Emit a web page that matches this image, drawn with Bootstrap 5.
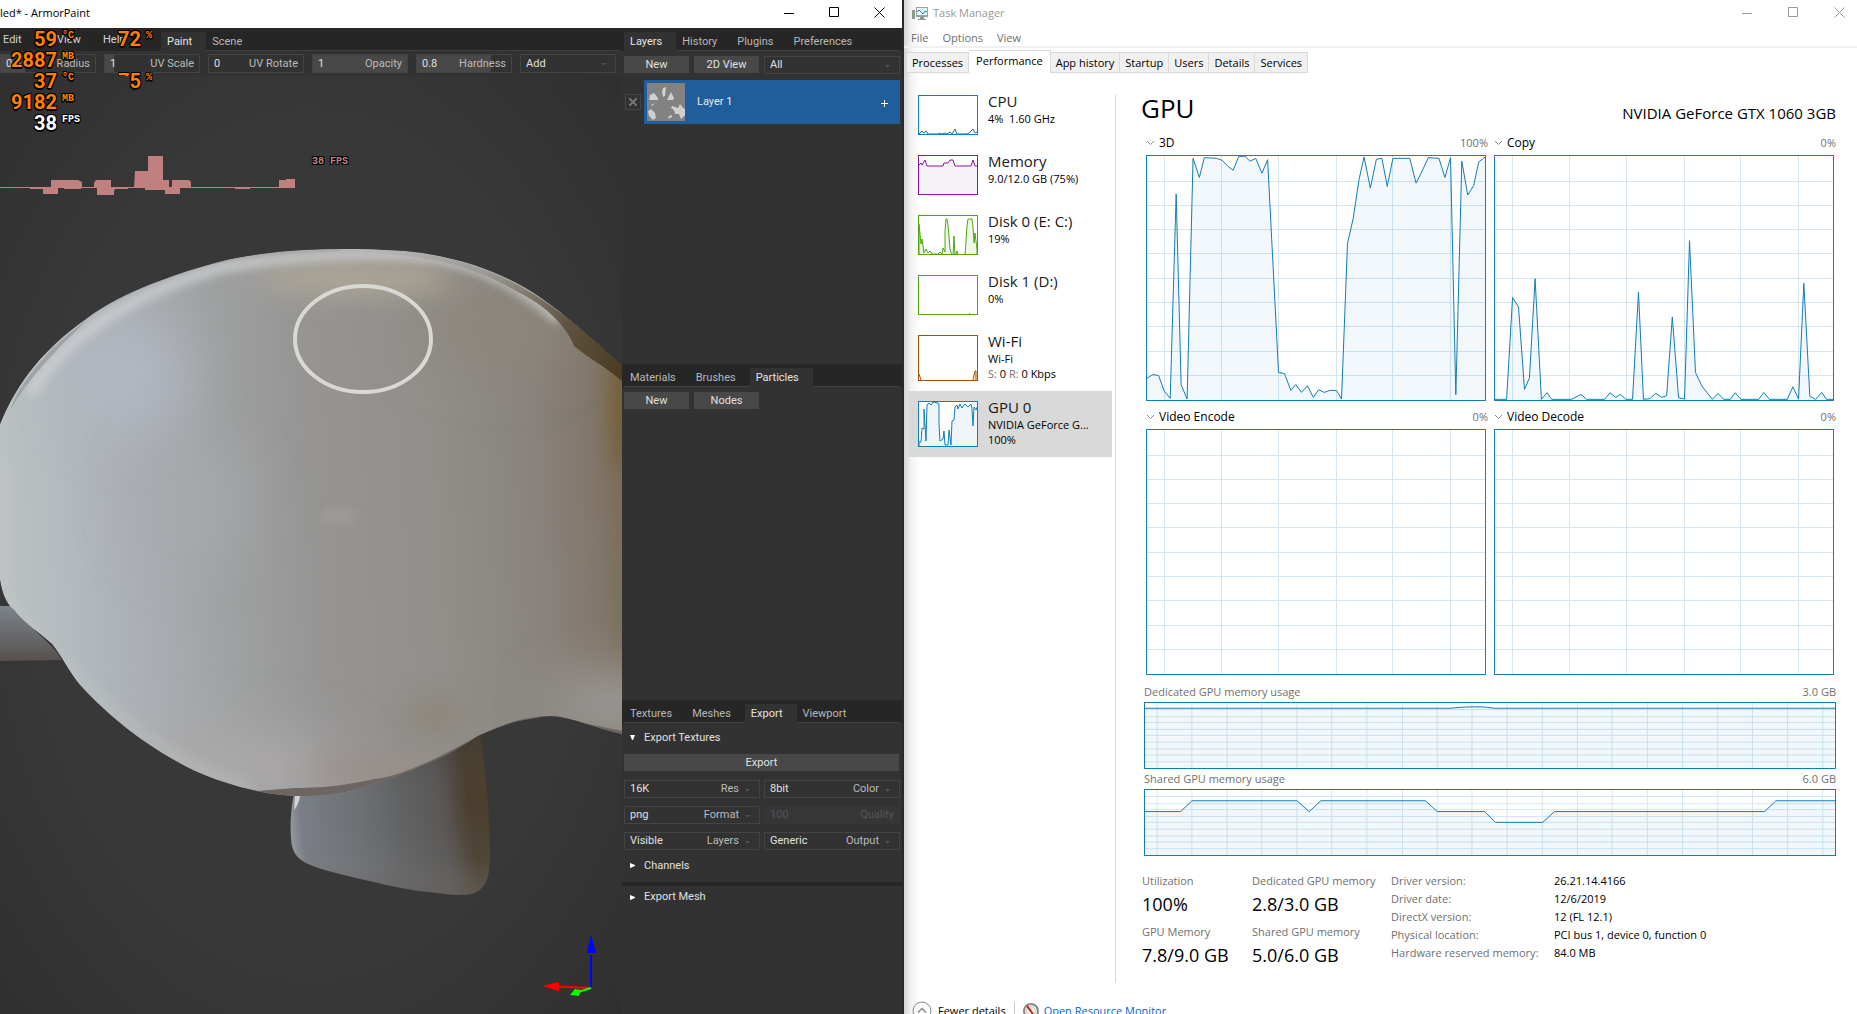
<!DOCTYPE html>
<html lang="en">
<head>
<meta charset="utf-8">
<meta name="viewport" content="width=device-width, initial-scale=1">
<title>ArmorPaint and Task Manager</title>
<link href="https://cdn.jsdelivr.net/npm/bootstrap@5.3.0/dist/css/bootstrap.min.css" rel="stylesheet">
<style>
  body { font-family: "Open Sans", "Noto Sans", sans-serif; font-size: 11px; line-height: 16px; color: #000; background: #fff; }
  button, input, select { font: inherit; color: inherit; border: 0; background: none; padding: 0; margin: 0; border-radius: 0; min-width: 0; }
  svg { display: block; }
  .desk { display: grid; grid-template-columns: 904fr 953fr; grid-template-rows: 100%; height: 100vh; overflow: hidden; background: #262a34; }
  .win-btn { width: 46px; height: 100%; display: flex; align-items: center; justify-content: center; }
  .win-btn svg { width: 11px; height: 11px; fill: none; stroke: currentColor; }

  /* ArmorPaint */
  .ap { display: flex; flex-direction: column; margin-right: 2px; min-width: 0; min-height: 0; background: #323232; }
  .ap-title { height: 28px; flex: none; background: #fff; line-height: 25px; }
  .ap-title .win-btn { width: 45px; height: 24px; }
  .ap-body { display: grid; grid-template-columns: 622fr 280fr; grid-template-rows: 100%; flex: 1; min-height: 0; font-family: Roboto, sans-serif; color: #ddd; }
  .ap-tabs { display: flex; height: 23px; padding-top: 4px; background: linear-gradient(#404040, #404040) 2px 22px / calc(100% - 4px) 1px no-repeat #262626; color: #b8b8b8; }
  .ap-tabs button { padding: 0 14px 0 6px; line-height: 18px; }
  .ap-side .ap-tabs { padding-left: 2px; }
  .ap-tabs .on { background: #323232; color: #e4e4e4; }
  .ap-menu { display: grid; grid-template-columns: 54px 46px 60px; flex: none; background: #262626; line-height: 15px; color: #d4d4d4; margin-right: 1px; }
  .ap-tabs .ap-menu button { text-align: left; padding: 0 0 0 3px; height: 15px; line-height: 15px; }
  .ap-tools { display: grid; grid-template-columns: repeat(6, 1fr); gap: 8px; padding: 3px 6px 3px 0; height: 25px; background: #323232; }
  .slot { display: flex; align-items: center; gap: 4px; height: 19px; padding: 0 5px; border: 1px solid #434343; line-height: 16px; color: #bbb;
          background: linear-gradient(90deg, #484848 var(--fill, 0%), transparent var(--fill, 0%)); }
  .slot input, .slot select { flex: 1; width: 0; color: #e0e0e0; appearance: none; outline: 0; }
  .slot .tri { width: 5px; height: 3px; margin: 2px 4px 0 2px; fill: #505050; }
  .slot.off, .slot.off input { color: #555; border-color: #363636; background-color: #363636; }
  .ap-view { position: relative; min-height: 0; flex: 1; background: #373737; }
  .ap-left { position: relative; display: flex; flex-direction: column; min-height: 0; min-width: 0; }
  .ap-side { display: flex; flex-direction: column; min-height: 0; min-width: 0; }
  .ap-sec { flex: 336 1 0; min-height: 0; }
  .ap-sec.last { flex-grow: 314; }
  .ap-btn { height: 17px; line-height: 17px; background: #484848; color: #e0e0e0; text-align: center; }
  .ap-row { display: grid; grid-template-columns: 65px 65px 1fr; gap: 5px; padding: 5px 2px 0; }
  .ap-row .slot { height: 18px; }
  .layer-row { display: flex; align-items: center; gap: 3px; padding: 6px 2px 0 3px; }
  .eye { width: 16px; height: 16px; border: 1px solid #454545; appearance: none; margin: 0;
         background: linear-gradient(45deg, transparent 42%, #707070 42% 58%, transparent 58%) 3px 3px / 8px 8px no-repeat, linear-gradient(-45deg, transparent 42%, #707070 42% 58%, transparent 58%) 3px 3px / 8px 8px no-repeat; }
  .layer { display: flex; align-items: center; flex: 1; height: 44px; padding: 0 10px 0 3px; background: #205d9c; color: #e8e8e8; text-align: left; }
  .layer .plus { width: 11px; height: 11px; stroke: #fff; margin-top: 3px; }
  .fold { display: flex; align-items: center; gap: 9px; padding-left: 8px; height: 31px; color: #e0e0e0; }
  .fold svg { width: 5px; height: 5px; fill: #fff; }
  .fold.low { height: 22px; }
  .fold.high { padding-bottom: 2px; }
  .export { display: grid; padding: 0 3px 0 2px; }
  .pairs { display: grid; grid-template-columns: 1fr 1fr; gap: 8px 4px; padding: 9px 2px 0; }
  .pairs .slot { height: 18px; }
  .mesh-rule { height: 4px; margin-top: 1px; background: #262626; }

  /* frame-rate overlay */
  .osd { position: absolute; left: 0; top: 0; display: grid; grid-template-columns: 57px 26px 58px 20px; grid-auto-rows: 21px; color: #ff8000; text-align: right; font: bold 20px/22px Roboto, sans-serif;
         text-shadow: 1px 1px #000, -1px 1px #000, 1px -1px #000, -1px -1px #000, 0 2px #000; }
  .osd small { font: bold 10px/16px "Liberation Mono", monospace; text-align: left; padding-left: 5px; }
  .osd .fps { color: #fff; }
  .osd .cut { display: inline-block; clip-path: inset(0 0 16px 0); }
  .osd-plot { position: absolute; left: 0; top: 80px; width: 296px; height: 42px; fill: #c08080; }
  .osd-now { position: absolute; left: 312px; top: 80px; font: bold 10px/12px "Liberation Mono", monospace; color: #c08080; text-shadow: 1px 1px #000, -1px 1px #000, 1px -1px #000, -1px -1px #000; }

  /* Task Manager */
  .tm { display: flex; flex-direction: column; min-width: 0; min-height: 0; overflow: hidden; background: linear-gradient(90deg, #d4d4d4, #f2f2f2 7px, #fff 16px) #fff; }
  .tm-title { display: flex; align-items: center; height: 27px; flex: none; padding: 0 0 2px 8px; margin-right: -5px; color: #999; }
  .tm-title svg.logo { width: 16px; height: 15px; margin: 2px 5px 0 0; }
  .tm-menu { display: flex; gap: 14px; padding-left: 7px; height: 21px; flex: none; color: #6d6d6d; border-bottom: 2px solid #f0f0f0; }
  .tm-menu button { line-height: 22px; height: 20px; }
  .tm-tabs { display: flex; align-items: flex-end; height: 25px; flex: none; padding-left: 2px; }
  .tm-tabs button { height: 21px; padding: 0 5px; background: #f0f0f0; border: 1px solid #d9d9d9; border-left: 0; line-height: 19px; }
  .tm-tabs button:first-child { border-left: 1px solid #d9d9d9; }
  .tm-tabs .on { height: 23px; background: #fff; border-bottom: 0; padding: 0 7px 3px; }
  .tm-body { display: flex; flex: none; min-height: 910px; }
  .tm-list { width: 211px; flex: none; padding: 12px 3px 0 4px; }
  .res { display: flex; gap: 10px; width: 100%; min-height: 60px; padding: 6px 8px 5px 10px; text-align: left; align-items: flex-start; }
  .res.tall { min-height: 66px; }
  .res.on { background: #d9d9d9; }
  .res > svg { flex: none; width: 60px; height: 40px; margin-top: 4px; border: 1px solid var(--c); background: #fff; stroke: var(--c); fill: var(--f); }
  .res.tall > svg { height: 46px; }
  .res b { display: block; font-weight: 400; font-size: 15px; line-height: 20px; color: #1a1a1a; }
  .res span span { display: block; white-space: nowrap; line-height: 15px; }
  .muted { color: #707070; }
  .tm-main { flex: 1; min-width: 0; margin-top: 22px; padding: 0 21px 0 26px; border-left: 1px solid #d9d9d9; }
  .gpu-head { display: flex; justify-content: space-between; align-items: center; height: 44px; margin: -8px 0 0 -1px; }
  .gpu-head h1 { font-size: 26px; line-height: 36px; margin: 0; padding-bottom: 2px; font-weight: 400; }
  .gpu-head h2 { font-size: 15px; line-height: 20px; margin: 8px 0 0; font-weight: 400; }
  .engines { display: grid; grid-template-columns: 1fr 1fr; gap: 4px 8px; padding: 0 2px 0 4px; }
  .cap { display: flex; align-items: center; height: 24px; padding-bottom: 1px; font-size: 12px; margin-right: -2px; }
  .cap svg { width: 9px; height: 6px; margin-right: 4px; fill: none; stroke: #888; }
  .cap span { font-size: 11px; margin-left: auto; color: #707070; }
  .plot { border: 1px solid #117dbb; height: 246px; }
  .plot svg { width: 100%; height: 100%; }
  .plot .grid { stroke: #d5e6f1; shape-rendering: crispEdges; fill: none; }
  .plot .area { fill: #117dbb; fill-opacity: .06; stroke: #117dbb; vector-effect: non-scaling-stroke; }
  .mem { padding-left: 2px; }
  .mem .plot { height: 67px; }
  .mem-cap { display: flex; justify-content: space-between; line-height: 20px; color: #707070; }
  .mem-cap.first { margin-top: 7px; }
  .stats { display: flex; margin-top: 16px; line-height: 18px; white-space: nowrap; }
  .stats dl, .stats dd, .stats dt { margin: 0; font-weight: 400; }
  .stats dt { color: #707070; }
  .big { display: grid; grid-template-columns: 110px 139px; row-gap: 5px; }
  .big dd { font-size: 18px; line-height: 28px; }
  .drv { display: grid; grid-template-columns: 163px auto; align-content: start; }
  .tm-foot { display: flex; align-items: center; flex: none; height: 24px; margin-top: 16px; padding-left: 8px; }
  .tm-foot svg { width: 20px; height: 20px; fill: none; }
  .tm-foot button { display: flex; align-items: center; gap: 6px; padding-right: 8px; border-right: 1px solid #c8c8c8; height: 18px; }
  .tm-foot a { display: flex; align-items: center; gap: 5px; margin-left: 8px; color: #0066cc; text-decoration: none; }
  .tm-foot a svg { width: 16px; height: 16px; }
</style>
<script src="https://cdn.jsdelivr.net/npm/bootstrap@5.3.0/dist/js/bootstrap.bundle.min.js"></script>
</head>
<body>
<svg width="0" height="0" class="position-absolute" aria-hidden="true">
  <defs>
    <path id="g-big" vector-effect="non-scaling-stroke" d="M52 0V738M226 0V738M397 0V738M571 0V738M742 0V738M916 0V738M0 76H1020M0 149H1020M0 223H1020M0 296H1020M0 370H1020M0 443H1020M0 517H1020M0 590H1020M0 664H1020"/>
    <path id="g-mem" vector-effect="non-scaling-stroke" d="M26 0V199M100 0V199M175 0V199M249 0V199M324 0V199M398 0V199M473 0V199M549 0V199M623 0V199M697 0V199M772 0V199M847 0V199M922 0V199M996 0V199M1071 0V199M1146 0V199M1221 0V199M1295 0V199M1370 0V199M1445 0V199M0 20H1471M0 42H1471M0 60H1471M0 81H1471M0 99H1471M0 120H1471M0 141H1471M0 159H1471M0 180H1471"/>
  </defs>
</svg>
<main class="desk">
  <section class="ap" aria-label="ArmorPaint">
    <header class="ap-title d-flex justify-content-between">
      <span class="text-nowrap">led* - ArmorPaint</span>
      <div class="d-flex">
        <button class="win-btn" aria-label="Minimize"><svg viewBox="0 0 11 11"><path d="M0 6.500H10"/></svg></button>
        <button class="win-btn" aria-label="Maximize"><svg viewBox="0 0 11 11"><path d="M.5.5h9v9h-9z"/></svg></button>
        <button class="win-btn" aria-label="Close"><svg viewBox="0 0 11 11"><path d="M.5.5l10 10M10.500.5l-10 10"/></svg></button>
      </div>
    </header>
    <div class="ap-body">
      <div class="ap-left">
        <nav class="ap-tabs">
          <div class="ap-menu"><button>Edit</button><button>View</button><button>Help</button></div>
          <button class="on">Paint</button><button>Scene</button>
        </nav>
        <div class="ap-tools">
          <label class="slot" style="--fill:25%"><input value="0.5"><span>Radius</span></label>
          <label class="slot" style="--fill:10%"><input value="1"><span>UV Scale</span></label>
          <label class="slot"><input value="0"><span>UV Rotate</span></label>
          <label class="slot" style="--fill:100%"><input value="1"><span>Opacity</span></label>
          <label class="slot" style="--fill:79%"><input value="0.8"><span>Hardness</span></label>
          <label class="slot"><select aria-label="Blending"><option>Add</option></select><svg class="tri" viewBox="0 0 5 3"><path d="M0 0h5L2.500 3z"/></svg></label>
        </div>
        <div class="ap-view">
          <svg class="position-absolute w-100 h-100" viewBox="0 76 622 938" preserveAspectRatio="xMidYMid slice" role="img" aria-label="3D viewport">
            <defs>
              <radialGradient id="bg" cx=".5" cy=".5" r=".75"><stop offset=".6" stop-color="#383838"/><stop offset="1" stop-color="#2e2e2e"/></radialGradient>
              <linearGradient id="skin" gradientUnits="userSpaceOnUse" x1="0" y1="520" x2="622" y2="480">
                <stop offset="0" stop-color="#bcc1c2"/><stop offset=".1" stop-color="#b4babe"/><stop offset=".24" stop-color="#a9adb2"/><stop offset=".36" stop-color="#9fa1a2"/><stop offset=".5" stop-color="#969594"/><stop offset=".7" stop-color="#918f8a"/><stop offset=".87" stop-color="#88827c"/><stop offset=".95" stop-color="#81776c"/><stop offset="1" stop-color="#7b6d58"/>
              </linearGradient>
              <linearGradient id="ear" gradientUnits="userSpaceOnUse" x1="291" y1="835" x2="490" y2="810">
                <stop offset="0" stop-color="#979ca3"/><stop offset=".06" stop-color="#7b8087"/><stop offset=".35" stop-color="#6e7175"/><stop offset=".55" stop-color="#626364"/><stop offset=".76" stop-color="#5a5856"/><stop offset=".9" stop-color="#4a3e2e"/><stop offset="1" stop-color="#4d3f2c"/>
              </linearGradient>
              <linearGradient id="earlow" x1="0" y1="0" x2="0" y2="1"><stop offset="0" stop-color="#333" stop-opacity=".4"/><stop offset=".4" stop-color="#555" stop-opacity="0"/><stop offset=".8" stop-color="#777" stop-opacity=".15"/><stop offset="1" stop-color="#6b6461" stop-opacity=".6"/></linearGradient>
              <linearGradient id="jaw" x1="0" y1="0" x2="0" y2="1"><stop offset="0" stop-color="#7c848b"/><stop offset="1" stop-color="#57514f"/></linearGradient>
              <linearGradient id="rim" gradientUnits="userSpaceOnUse" x1="380" y1="250" x2="622" y2="370"><stop offset="0" stop-color="#b5b5b4"/><stop offset=".4" stop-color="#9b9995"/><stop offset=".75" stop-color="#5f533f"/><stop offset="1" stop-color="#4a3b22"/></linearGradient>
              <filter id="b30" x="-100%" y="-150%" width="300%" height="400%"><feGaussianBlur stdDeviation="28"/></filter>
              <filter id="b14" x="-100%" y="-200%" width="300%" height="500%"><feGaussianBlur stdDeviation="14"/></filter>
              <filter id="b8" x="-150%" y="-50%" width="400%" height="200%"><feGaussianBlur stdDeviation="8"/></filter>
              <filter id="b4" x="-50%" y="-50%" width="200%" height="200%"><feGaussianBlur stdDeviation="5"/></filter>
              <path id="head" d="M0 424C18 380 46 347 86 319C106 304 127 294 149 285C184 271 222 259 261 254C289 250 317 249 345 249C372 249 400 250 422 253C441 256 458 260 474 265C492 271 507 278 522 286C540 296 554 307 570 320C588 335 604 349 622 366V734C598 729 572 717 550 716C537 717 525 720 514 722C502 726 490 731 478 736C462 746 447 756 430 762C413 770 396 777 378 782C363 788 348 792 333 794C320 796 308 796 295 796C282 795 270 794 257 791C234 786 213 779 193 770C175 761 158 751 141 739C120 724 99 706 80 685C69 672 62 656 52 644C40 633 25 624 14 610C6 604 2 592 0 580Z"/>
              <clipPath id="hc"><use href="#head"/></clipPath>
              <path id="earp" d="M297 780C289 810 290 835 292 846C295 858 303 862 313 866C332 873 353 877 374 882C402 889 430 893 458 895C466 895 473 895 478 891C486 886 488 878 489 870C491 850 489 820 487 790L480 728Z"/>
            </defs>
            <rect y="76" width="622" height="938" fill="url(#bg)"/>
            <path d="M0 606H14C30 630 50 640 62 660L0 661Z" fill="url(#jaw)"/>
            <use href="#earp" fill="url(#ear)"/><use href="#earp" fill="url(#earlow)"/>
            <path d="M295 796h5q-1 8-6 14z" fill="#d0d4d8"/>
            <g clip-path="url(#hc)">
              <use href="#head" fill="url(#skin)"/>
              <ellipse cx="130" cy="380" rx="60" ry="60" fill="#b4b9c4" filter="url(#b30)" opacity=".8"/>
              <ellipse cx="190" cy="500" rx="60" ry="70" fill="#a7abaf" filter="url(#b30)" opacity=".6"/>
              <ellipse cx="500" cy="330" rx="80" ry="35" fill="#8d867d" filter="url(#b30)"/>
              <ellipse cx="355" cy="278" rx="100" ry="14" fill="#b2aa99" filter="url(#b14)"/>
              <ellipse cx="230" cy="770" rx="120" ry="35" fill="#aca9a8" filter="url(#b30)"/>
              <ellipse cx="380" cy="770" rx="70" ry="18" fill="#9a8e8a" filter="url(#b14)" opacity=".8"/>
              <ellipse cx="435" cy="715" rx="26" ry="16" fill="#8b8071" filter="url(#b14)" opacity=".7"/>
              <ellipse cx="622" cy="705" rx="70" ry="28" fill="#a3a2a3" filter="url(#b30)"/>
              <ellipse cx="622" cy="410" rx="10" ry="60" fill="#745c30" filter="url(#b8)" opacity=".8"/>
              <path d="M30 395C65 330 150 288 220 268C290 254 380 251 440 258C490 268 525 290 560 320" fill="none" stroke="#d2d4d6" stroke-width="11" filter="url(#b4)" opacity=".75"/>
              <path d="M0 450V590Q20 625 60 660L110 712Q190 775 250 790" fill="none" stroke="#c3c8c8" stroke-width="8" filter="url(#b8)" opacity=".7"/>
              <ellipse cx="338" cy="516" rx="18" ry="9" fill="#a39e99" filter="url(#b4)" opacity=".7"/>
              <path d="M340 248C400 250 440 254 474 266C530 284 580 325 622 366V381C605 366 588 358 574 346C566 325 545 305 516 291C480 270 430 252 340 252Z" fill="url(#rim)"/>
              <path d="M10 411C18 385 50 345 87 320C60 347 30 375 10 411Z" fill="#9fa4a9"/>
              <path d="M86 318Q130 288 200 266Q260 252 340 250" fill="none" stroke="#a9abac" stroke-width="2"/>
              <path d="M257 791L295 788C330 788 350 784 375 779C405 775 440 757 478 736C500 725 525 716 550 716L622 731V740H550L478 745L380 800H257Z" fill="#6c6562"/>
            </g>
            <ellipse cx="363" cy="339" rx="68" ry="53" fill="none" stroke="#d9d8d5" stroke-width="4"/>
            <path d="M591 988V955" stroke="#00f" stroke-width="2"/><path d="M591 935l5 18h-9z" fill="#00f"/>
            <path d="M591 988L555 986.500" stroke="#f00" stroke-width="2"/><path d="M542 986l17-4v9z" fill="#f00"/>
            <path d="M591 988L575 993" stroke="#0f0" stroke-width="2"/><path d="M570 995l5-6 6 1-2 6z" fill="#0f0"/>
          </svg>
          <svg class="osd-plot" viewBox="0 156 296 42" preserveAspectRatio="none" aria-hidden="true"><path d="M0 187h295v1H0zM51 180h27l4 2v6H51zM43 187h15v7H43zM64 188h17v1H64zM30 188h13v1H30zM96 180h15v8H94v-5zM97 187h19l-2 4v4H97zM114 188h14v1h-14zM135 171h13v17h-14zM148 156h15v34h-15zM163 180h6v10h-24v-3h18zM165 187h15v7h-15zM172 180h17l2 2v6h-19zM235 188h15v1h-15zM279 180h7v-1h9v9h-16z"/></svg>
          <span class="osd-now">38 FPS</span>
        </div>
        <div class="osd" aria-label="Hardware monitor">
          <span>59</span><small>&deg;C</small><span>72</span><small>%</small>
          <span>2887</span><small>MB</small><span></span><small></small>
          <span>37</span><small>&deg;C</small><span><span class="cut">7</span>5</span><small>%</small>
          <span>9182</span><small>MB</small><span></span><small></small>
          <span class="fps">38</span><small class="fps">FPS</small>
        </div>
      </div>
      <aside class="ap-side">
        <section class="ap-sec">
          <nav class="ap-tabs"><button class="on">Layers</button><button>History</button><button>Plugins</button><button>Preferences</button></nav>
          <div class="ap-row">
            <button class="ap-btn">New</button><button class="ap-btn">2D View</button>
            <label class="slot"><select aria-label="Filter"><option>All</option></select><svg class="tri" viewBox="0 0 5 3"><path d="M0 0h5L2.500 3z"/></svg></label>
          </div>
          <div class="layer-row">
            <input type="checkbox" class="eye" checked aria-label="Show layer">
            <button class="layer">
              <svg width="38" height="38" viewBox="0 0 38 38"><path fill="#828282" d="M0 0h38v38H0z"/><path fill="#cfcfcf" d="M16 5l3-1-1 9-2 1-1-5zM3 12l4-2 4 5v2H2zM24 9l3 6-1 2h-6zM4 22l4-2-3 3zM1 28l3-2 4 4 1 5-3 2-4-4zM25 23l6 2 2-4 3 4 2 1v6l-4 4-2-5-4 0-1-4-3-2zM22 33l3-1v2l-4 2z"/></svg>
              <span class="flex-fill ps-2 ms-1">Layer 1</span>
              <svg class="plus" viewBox="0 0 11 11"><path d="M2 5.500h7M5.500 2v7"/></svg>
            </button>
          </div>
        </section>
        <section class="ap-sec">
          <nav class="ap-tabs"><button>Materials</button><button>Brushes</button><button class="on">Particles</button></nav>
          <div class="ap-row"><button class="ap-btn">New</button><button class="ap-btn">Nodes</button></div>
        </section>
        <section class="ap-sec last">
          <nav class="ap-tabs"><button>Textures</button><button>Meshes</button><button class="on">Export</button><button>Viewport</button></nav>
          <button class="fold high"><svg viewBox="0 0 5 5"><path d="M0 0h5L3 5H2z"/></svg>Export Textures</button>
          <div class="export"><button class="ap-btn">Export</button></div>
          <div class="pairs">
            <label class="slot"><select><option>16K</option></select>Res<svg class="tri" viewBox="0 0 5 3"><path d="M0 0h5L2.500 3z"/></svg></label>
            <label class="slot"><select><option>8bit</option></select>Color<svg class="tri" viewBox="0 0 5 3"><path d="M0 0h5L2.500 3z"/></svg></label>
            <label class="slot"><select><option>png</option></select>Format<svg class="tri" viewBox="0 0 5 3"><path d="M0 0h5L2.500 3z"/></svg></label>
            <label class="slot off"><input value="100" disabled>Quality</label>
            <label class="slot"><select><option>Visible</option></select>Layers<svg class="tri" viewBox="0 0 5 3"><path d="M0 0h5L2.500 3z"/></svg></label>
            <label class="slot"><select><option>Generic</option></select>Output<svg class="tri" viewBox="0 0 5 3"><path d="M0 0h5L2.500 3z"/></svg></label>
          </div>
          <button class="fold"><svg viewBox="0 0 5 5"><path d="M0 0l5 2v1L0 5z"/></svg>Channels</button>
          <div class="mesh-rule"></div>
          <button class="fold low"><svg viewBox="0 0 5 5"><path d="M0 0l5 2v1L0 5z"/></svg>Export Mesh</button>
        </section>
      </aside>
    </div>
  </section>

  <section class="tm" aria-label="Task Manager">
    <header class="tm-title">
      <svg class="logo" viewBox="0 0 16 15"><path fill="#8f9698" d="M0 4h3v9H0z"/><path fill="#5bc236" d="M0 6h2v2H0z"/><path fill="#9aa2a6" d="M4 1h12v10H4z"/><path fill="#e6f6fd" d="M5 2h10v7H5z"/><path d="M5 6l2-2 2 2 2 2 2-3 2 1" fill="none" stroke="#1c87c2"/><path fill="#8f9698" d="M8 11h4v2h2v1H6v-1h2z"/></svg>
      <span class="me-auto">Task Manager</span>
      <button class="win-btn" aria-label="Minimize"><svg viewBox="0 0 11 11"><path d="M0 6.500H10"/></svg></button>
      <button class="win-btn" aria-label="Maximize"><svg viewBox="0 0 11 11"><path d="M.5.5h9v9h-9z"/></svg></button>
      <button class="win-btn" aria-label="Close"><svg viewBox="0 0 11 11"><path d="M.5.5l10 10M10.500.5l-10 10"/></svg></button>
    </header>
    <nav class="tm-menu"><button>File</button><button>Options</button><button>View</button></nav>
    <nav class="tm-tabs"><button>Processes</button><button class="on">Performance</button><button>App history</button><button>Startup</button><button>Users</button><button>Details</button><button>Services</button></nav>
    <div class="tm-body">
      <div class="tm-list">
        <button class="res" style="--c:#117dbb;--f:#eef4f9"><svg viewBox="0 0 58 38"><path d="M0 38l3-3 2 2 2-2 2 3h10l2-1 2 1 3-1 2 1 3-2 2 2 3-5 2 5h10l2-1 4-4 2 4 2-1"/></svg><span><b>CPU</b><span>4%&nbsp; 1.60 GHz</span></span></button>
        <button class="res" style="--c:#8b12ae;--f:#f4f2f4"><svg viewBox="0 0 58 38"><path d="M-1 40V10l3-3 1 2 3-5 2 6h16l1-3h4l2-3h3l2 6h16l2-6 2 6h5v30z"/></svg><span><b>Memory</b><span>9.0/12.0 GB (75%)</span></span></button>
        <button class="res" style="--c:#4da60c;--f:#eff7e9"><svg viewBox="0 0 58 38"><path d="M0 39V8l2 20 1-5 2 14 2-4 2 4 2-2 2 3h6l2-2 2 2 1-6 2 4 0-20 1-13h1l1 6 2 24 2 7h1l1-20 1 20 2-5 1 5h7l2-30 1-7h4l1 8 1 16 1-10 2 16v9z"/></svg><span><b>Disk 0 (E: C:)</b><span>19%</span></span></button>
        <button class="res" style="--c:#4da60c;--f:#eff7e9"><svg viewBox="0 0 58 38"><path d="M50 37.500h1"/></svg><span><b>Disk 1 (D:)</b><span>0%</span></span></button>
        <button class="res tall" style="--c:#a74f01;--f:#f6e9dd"><svg viewBox="0 0 58 44"><path d="M0 38l2 6M54 44l2-9h1v9"/></svg><span><b>Wi-Fi</b><span>Wi-Fi</span><span><span class="d-inline muted">S:</span> 0 <span class="d-inline muted">R:</span> 0 Kbps</span></span></button>
        <button class="res tall on" style="--c:#117dbb;--f:#f0f5fa"><svg viewBox="0 0 58 44"><path d="M0 45V40h2l1-14 2 1V7l2 32 1-36 2-2 2 2 2-3 5 1 1 1V22l1 17 3-2 1-8 1 14h3l1-15 2 15 1-24 2-1 1-13 2-2 1 4 2-5 2 4 3-4 3 3 3-3 1 5 1 17 1-19 2 3 2-5V45H0z"/></svg><span><b>GPU 0</b><span>NVIDIA GeForce G...</span><span>100%</span></span></button>
      </div>
      <div class="tm-main">
        <div class="gpu-head"><h1>GPU</h1><h2>NVIDIA GeForce GTX 1060 3GB</h2></div>
        <div class="engines">
          <div>
            <div class="cap"><svg viewBox="0 0 9 6"><path d="M1 1l3.500 3.500L8 1"/></svg>3D<span>100%</span></div>
            <div class="plot"><svg viewBox="0 0 1020 738" preserveAspectRatio="none"><use class="grid" href="#g-big"/><path class="area" transform="translate(-78 -225)" d="M70 970V902L96 886L113 889L130 936L148 958L166 340L181 917L199 960L217 232L236 290L251 230L288 232L305 238L322 256L338 268L355 226H374L389 241L406 232L425 277L442 236L475 880L493 883L512 934L527 916L544 940L562 920L580 955L596 932L613 940L630 934H650L665 960L683 490L700 415L718 295L733 228L752 322L770 235L787 232L803 317L820 232H871L890 307L908 271L927 230L959 232L977 290L994 230L1010 947L1028 241L1046 343L1064 314L1079 243L1104 224V970Z"/></svg></div>
          </div>
          <div>
            <div class="cap"><svg viewBox="0 0 9 6"><path d="M1 1l3.500 3.500L8 1"/></svg>Copy<span>0%</span></div>
            <div class="plot"><svg viewBox="0 0 1020 738" preserveAspectRatio="none"><use class="grid" href="#g-big"/><path class="area" transform="translate(-42 -225)" d="M34 961H77L95 653L113 682L131 931L146 896L163 596L182 961L199 941L213 961H272L302 946L318 961H373L389 941L406 955L421 946L437 961H457L475 637L490 961L509 959L527 943L545 955L560 950L577 712L596 956L614 960L629 481L647 880L666 920L698 961L715 943L732 961H752L767 941L784 961H838L853 940L870 961H924L941 923L958 960L974 610L992 952L1010 961L1028 940L1042 961H1070V970H34Z"/></svg></div>
          </div>
          <div>
            <div class="cap"><svg viewBox="0 0 9 6"><path d="M1 1l3.500 3.500L8 1"/></svg>Video Encode<span>0%</span></div>
            <div class="plot"><svg viewBox="0 0 1020 738" preserveAspectRatio="none"><use class="grid" href="#g-big"/></svg></div>
          </div>
          <div>
            <div class="cap"><svg viewBox="0 0 9 6"><path d="M1 1l3.500 3.500L8 1"/></svg>Video Decode<span>0%</span></div>
            <div class="plot"><svg viewBox="0 0 1020 738" preserveAspectRatio="none"><use class="grid" href="#g-big"/></svg></div>
          </div>
        </div>
        <div class="mem">
          <div class="mem-cap first"><span>Dedicated GPU memory usage</span><span>3.0 GB</span></div>
          <div class="plot"><svg viewBox="0 0 1471 199" preserveAspectRatio="none"><use class="grid" href="#g-mem"/><path class="area" d="M-5 205V16H650Q710 7 745 16H1476V205Z"/></svg></div>
          <div class="mem-cap"><span>Shared GPU memory usage</span><span>6.0 GB</span></div>
          <div class="plot"><svg viewBox="0 0 1471 199" preserveAspectRatio="none"><use class="grid" href="#g-mem"/><path class="area" d="M-5 205V66H76L100 33H324L350 66L375 33H598L623 66H724L747 99H848L873 66H1321L1345 33H1476V205Z"/></svg></div>
        </div>
        <div class="stats">
          <div class="big">
            <dl><dt>Utilization</dt><dd>100%</dd></dl>
            <dl><dt>Dedicated GPU memory</dt><dd>2.8/3.0 GB</dd></dl>
            <dl><dt>GPU Memory</dt><dd>7.8/9.0 GB</dd></dl>
            <dl><dt>Shared GPU memory</dt><dd>5.0/6.0 GB</dd></dl>
          </div>
          <dl class="drv">
            <dt>Driver version:</dt><dd>26.21.14.4166</dd>
            <dt>Driver date:</dt><dd>12/6/2019</dd>
            <dt>DirectX version:</dt><dd>12 (FL 12.1)</dd>
            <dt>Physical location:</dt><dd>PCI bus 1, device 0, function 0</dd>
            <dt>Hardware reserved memory:</dt><dd>84.0 MB</dd>
          </dl>
        </div>
      </div>
    </div>
    <footer class="tm-foot">
      <button><svg viewBox="0 0 20 20"><circle cx="10" cy="10" r="9" stroke="#888"/><path d="M6 11.500l4-4 4 4" stroke="#888" stroke-width="1.500"/></svg>Fewer details</button>
      <a href="#"><svg viewBox="0 0 16 16"><circle cx="8" cy="8" r="7" fill="#f4f4ee" stroke="#8a8a84" stroke-width="2"/><circle cx="8" cy="8" r="4.500" stroke="#c5c5bd"/><path d="M4 3l6 8" stroke="#d01818" stroke-width="2"/></svg>Open Resource Monitor</a>
    </footer>
  </section>
</main>
</body>
</html>
